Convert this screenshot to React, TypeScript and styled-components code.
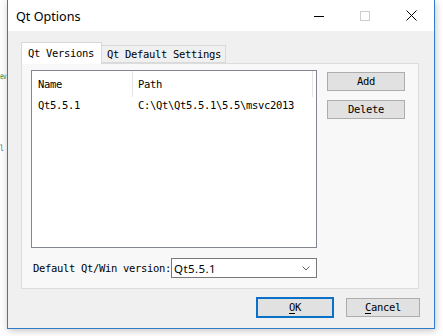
import React from "react";
import styled, { createGlobalStyle } from "styled-components";

const Global = createGlobalStyle`
  html, body { margin: 0; padding: 0; background: #ffffff; }
  #root { width: 443px; height: 336px; }
`;

const mono = `"DejaVu Sans Mono", "Liberation Mono", monospace`;

const Page = styled.div`
  width: 443px;
  height: 336px;
  display: flex;
  align-items: flex-start;
  overflow: hidden;
  background: #ffffff;
`;

const Backdrop = styled.div`
  width: 7px;
  height: 336px;
  flex: none;
  display: flex;
  flex-direction: column;
  font-family: ${mono};
  font-size: 6px;
  background: #fdfdfd;
`;

const CodeLine = styled.div<{ $top: number; $color: string }>`
  margin-top: ${(p) => p.$top}px;
  height: 10px;
  line-height: 10px;
  white-space: nowrap;
  color: ${(p) => p.$color};
  font-size: 6px;
  letter-spacing: -0.6px;
  transform: scaleY(1.4);
  transform-origin: left center;
`;

const Window = styled.div`
  box-sizing: border-box;
  width: 428px;
  height: 329px;
  flex: none;
  display: flex;
  flex-direction: column;
  border: 1px solid #2f7dc9;
  border-top: none;
  background: #f0f0f0;
  box-shadow: 1px 2px 7px rgba(0, 0, 0, 0.22);
  position: relative;
  z-index: 1;
`;

const TitleBar = styled.div`
  height: 31px;
  flex: none;
  display: flex;
  align-items: center;
  background: #ffffff;
  padding-left: 8px;
`;

const Title = styled.div`
  flex: 1;
  font-family: "Noto Sans", "Open Sans", sans-serif;
  font-size: 12.6px;
  color: #000;
  padding-top: 1px;
`;

const CaptionButton = styled.div`
  width: 46px;
  height: 31px;
  display: flex;
  align-items: center;
  justify-content: center;
`;

const Client = styled.div`
  flex: 1;
  display: flex;
  flex-direction: column;
  padding: 11px 14px 10px 13px;
`;

const TabBar = styled.div`
  height: 21px;
  display: flex;
  align-items: flex-end;
  position: relative;
  z-index: 1;
`;

const Tab = styled.div<{ $active?: boolean }>`
  box-sizing: border-box;
  height: ${(p) => (p.$active ? 22 : 18)}px;
  margin-bottom: ${(p) => (p.$active ? -1 : 0)}px;
  margin-left: ${(p) => (p.$active ? 0 : -1)}px;
  padding: 0 ${(p) => (p.$active ? 7 : 4)}px 0 ${(p) => (p.$active ? 6 : 5)}px;
  display: flex;
  align-items: center;
  border: 1px solid #d9d9d9;
  border-bottom: ${(p) => (p.$active ? "none" : "1px solid #d9d9d9")};
  background: ${(p) => (p.$active ? "#ffffff" : "#f0f0f0")};
  font-family: ${mono};
  font-size: 10.5px;
  letter-spacing: -0.32px;
  color: #000;
  white-space: nowrap;
  padding-bottom: ${(p) => (p.$active ? 1 : 0)}px;
`;

const Pane = styled.div`
  box-sizing: border-box;
  height: 226px;
  width: 398px;
  display: flex;
  flex-direction: column;
  border: 1px solid #dcdcdc;
  background: #f8f8f8;
  padding: 6px 13px 10px 9px;
`;

const TopRow = styled.div`
  flex: 1;
  display: flex;
  gap: 10px;
  align-items: flex-start;
`;

const List = styled.div`
  box-sizing: border-box;
  width: 286px;
  height: 178px;
  border: 1px solid #828790;
  background: #ffffff;
  display: flex;
  flex-direction: column;
`;

const Row = styled.div<{ $header?: boolean }>`
  display: grid;
  grid-template-columns: 101px 180px 1fr;
  height: ${(p) => (p.$header ? 26 : 16)}px;
  align-items: center;
`;

const Cell = styled.div<{ $divider?: boolean; $pad: number }>`
  height: 100%;
  display: flex;
  align-items: center;
  padding-left: ${(p) => p.$pad}px;
  border-right: ${(p) => (p.$divider ? "1px solid #e5e5e5" : "none")};
  font-family: ${mono};
  font-size: 10.5px;
  letter-spacing: -0.32px;
  color: #000;
  white-space: nowrap;
`;

const ButtonColumn = styled.div`
  display: flex;
  flex-direction: column;
  gap: 9px;
  padding-top: 2px;
`;

const Button = styled.div<{ $w: number; $default?: boolean }>`
  box-sizing: border-box;
  width: ${(p) => p.$w}px;
  height: ${(p) => (p.$default ? 21 : 19)}px;
  display: flex;
  align-items: center;
  justify-content: center;
  background: #e1e1e1;
  border: ${(p) => (p.$default ? "2px solid #0a70c8" : "1px solid #adadad")};
  font-family: ${mono};
  font-size: 10.5px;
  letter-spacing: -0.32px;
  color: #000;
  padding-bottom: 1px;
`;

const U = styled.span`
  text-decoration: underline;
  text-underline-offset: 2px;
`;

const BottomRow = styled.div`
  width: 286px;
  height: 20px;
  margin-top: 10px;
  display: flex;
  align-items: center;
`;

const Label = styled.div`
  padding-left: 2px;
  font-family: ${mono};
  font-size: 10.5px;
  letter-spacing: -0.32px;
  color: #000;
  white-space: nowrap;
`;

const Combo = styled.div`
  box-sizing: border-box;
  flex: 1;
  height: 20px;
  display: flex;
  align-items: center;
  border: 1px solid #7a7a7a;
  background: #ffffff;
  padding: 0 6px 0 2px;
`;

const ComboText = styled.div`
  flex: 1;
  font-family: "Noto Sans", sans-serif;
  font-size: 11.5px;
  letter-spacing: 0.4px;
  color: #000;
  padding-top: 1px;
`;

const DialogButtons = styled.div`
  margin-top: 8px;
  display: flex;
  justify-content: flex-end;
  align-items: center;
  gap: 12px;
  height: 21px;
`;

export default function App() {
  return (
    <>
      <Global />
      <Page>
        <Backdrop>
          <CodeLine $top={71} $color="#2e8b2e">
            ev
          </CodeLine>
          <CodeLine $top={62} $color="#1f4e6e">
            l
          </CodeLine>
        </Backdrop>
        <Window>
          <TitleBar>
            <Title>Qt Options</Title>
            <CaptionButton>
              <svg width="10" height="10" viewBox="0 0 10 10">
                <line x1="0" y1="5.5" x2="10" y2="5.5" stroke="#000" strokeWidth="1" />
              </svg>
            </CaptionButton>
            <CaptionButton>
              <svg width="10" height="10" viewBox="0 0 10 10">
                <rect x="0.5" y="0.5" width="9" height="9" fill="none" stroke="#cccccc" strokeWidth="1" />
              </svg>
            </CaptionButton>
            <CaptionButton>
              <svg width="11" height="11" viewBox="0 0 11 11">
                <path d="M0.5 0.5 L10.5 10.5 M10.5 0.5 L0.5 10.5" stroke="#000" strokeWidth="1" />
              </svg>
            </CaptionButton>
          </TitleBar>
          <Client>
            <TabBar>
              <Tab $active>Qt Versions</Tab>
              <Tab>Qt Default Settings</Tab>
            </TabBar>
            <Pane>
              <TopRow>
                <List>
                  <Row $header>
                    <Cell $pad={6} $divider>
                      Name
                    </Cell>
                    <Cell $pad={5} $divider>
                      Path
                    </Cell>
                    <Cell $pad={0} />
                  </Row>
                  <Row>
                    <Cell $pad={6}>Qt5.5.1</Cell>
                    <Cell $pad={5}>C:\Qt\Qt5.5.1\5.5\msvc2013</Cell>
                    <Cell $pad={0} />
                  </Row>
                </List>
                <ButtonColumn>
                  <Button $w={78}>Add</Button>
                  <Button $w={78}>Delete</Button>
                </ButtonColumn>
              </TopRow>
              <BottomRow>
                <Label>Default Qt/Win version:</Label>
                <Combo>
                  <ComboText>Qt5.5.1</ComboText>
                  <svg width="8" height="5" viewBox="0 0 8 5">
                    <path d="M0.5 0.5 L4 4 L7.5 0.5" fill="none" stroke="#606060" strokeWidth="1" />
                  </svg>
                </Combo>
              </BottomRow>
            </Pane>
            <DialogButtons>
              <Button $w={78} $default>
                <span>
                  <U>O</U>K
                </span>
              </Button>
              <Button $w={74}>
                <span>
                  <U>C</U>ancel
                </span>
              </Button>
            </DialogButtons>
          </Client>
        </Window>
      </Page>
    </>
  );
}
